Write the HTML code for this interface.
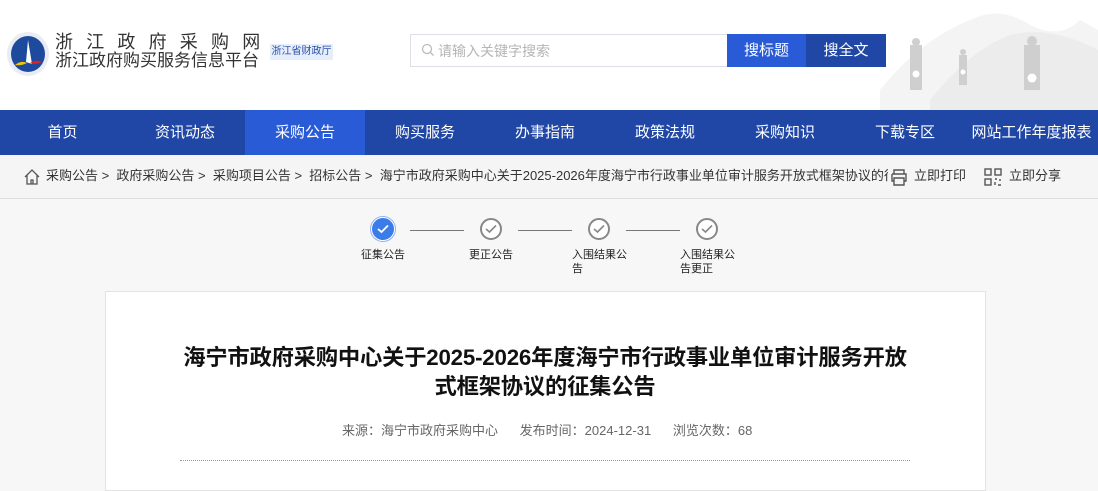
<!DOCTYPE html>
<html><head><meta charset="utf-8"><style>
*{margin:0;padding:0;box-sizing:border-box}
body{width:1098px;height:468px;overflow:hidden;background:#f7f7f7;font-family:"Liberation Sans","Noto Sans CJK SC",sans-serif;position:relative}
.hdr{position:absolute;left:0;top:0;width:1098px;height:110px;background:#fff}
.abs{position:absolute}
.nav{position:absolute;left:0;top:110px;width:1098px;height:45px;background:#2047a6;display:flex}
.nav div{width:120px;text-align:center;color:#fff;font-size:15px;line-height:45px}
.nav div.on{background:#2a5bd7}
.bc{position:absolute;left:0;top:155px;width:1098px;height:44px;background:#f5f5f5;border-bottom:1px solid #ddd;font-size:13px;color:#333;line-height:42px}
.step{position:absolute;top:218px;width:22px;height:22px;border-radius:50%;border:2px solid #888;background:#fff}
.step svg{position:absolute;left:3px;top:4px}
.sl{position:absolute;top:230px;height:1px;background:#777;width:54px}
.st{position:absolute;top:248px;font-size:11px;color:#222;line-height:14px;width:60px}
.card{position:absolute;left:105px;top:291px;width:881px;height:200px;background:#fff;border:1px solid #e3e3e3}
</style></head><body>
<div class="hdr">
 <svg class="abs" style="left:6px;top:30px" width="44" height="48" viewBox="0 0 44 48"><ellipse cx="22" cy="24" rx="21" ry="22" fill="#e9ecf2"/><ellipse cx="22" cy="24" rx="17" ry="18" fill="#1e4a9e"/><path d="M22 10 L26 34 L20 32 Z" fill="#fff"/><path d="M9 35 q6-5 12-2 q-6 3-12 2z" fill="#f2c500"/><path d="M24 33 q6-4 12-1 q-6 3-12 1z" fill="#d22"/></svg>
 <div class="abs" style="left:55px;top:32px;font-size:18px;color:#333;letter-spacing:13.2px;line-height:20px;white-space:nowrap">浙江政府采购网</div>
 <div class="abs" style="left:55px;top:51px;font-size:17px;color:#333;line-height:20px;white-space:nowrap">浙江政府购买服务信息平台</div>
 <div class="abs" style="left:270px;top:44px;width:63px;height:16px;background:#e6eefb;font-size:10px;color:#2a4fa5;text-align:center;line-height:16px">浙江省财政厅</div>
 <div class="abs" style="left:410px;top:34px;width:318px;height:33px;border:1px solid #dcdfe6;background:#fff"></div>
 <svg class="abs" style="left:421px;top:43px" width="14" height="14"><circle cx="6" cy="6" r="4.5" fill="none" stroke="#bbb" stroke-width="1.3"/><path d="M9.5 9.5 L12.5 12.5" stroke="#bbb" stroke-width="1.3"/></svg>
 <div class="abs" style="left:438px;top:41px;font-size:14px;color:#b5b5b5">请输入关键字搜索</div>
 <div class="abs" style="left:727px;top:34px;width:79px;height:33px;background:#2a5bd7;color:#fff;font-size:15px;text-align:center;line-height:33px">搜标题</div>
 <div class="abs" style="left:806px;top:34px;width:80px;height:33px;background:#2047a6;color:#fff;font-size:15px;text-align:center;line-height:33px">搜全文</div>
 <svg class="abs" style="left:870px;top:0" width="228" height="110" viewBox="0 0 228 110"><path d="M10 90 Q50 40 100 20 Q130 5 160 25 Q190 40 210 20 L228 30 L228 110 L10 110Z" fill="#f4f4f4"/><path d="M60 100 Q100 50 140 35 Q180 25 228 50 L228 110 L60 110Z" fill="#ececec"/>
 <g fill="#cfcfcf"><rect x="40" y="45" width="12" height="45"/><circle cx="46" cy="42" r="4"/><rect x="89" y="55" width="8" height="30"/><circle cx="93" cy="52" r="3"/><rect x="154" y="45" width="16" height="45"/><circle cx="162" cy="41" r="5"/></g>
 <g fill="#fff"><circle cx="46" cy="74" r="3.5"/><circle cx="93" cy="72" r="2.5"/><circle cx="162" cy="78" r="4.5"/></g></svg>
</div>
<div class="nav"><div style="width:125px">首页</div><div>资讯动态</div><div class="on">采购公告</div><div>购买服务</div><div>办事指南</div><div>政策法规</div><div>采购知识</div><div>下载专区</div><div style="width:133px">网站工作年度报表</div></div>
<div class="bc">
 <svg class="abs" style="left:23px;top:13px" width="18" height="18" viewBox="0 0 18 18"><path d="M2 9 L9 2 L16 9 M4 7 V16 H14 V7 M8 16 V12 H10 V16" fill="none" stroke="#555" stroke-width="1.3"/></svg>
 <div class="abs" style="left:46px;top:0;white-space:nowrap;width:842px;overflow:hidden">采购公告 &gt;&nbsp; 政府采购公告 &gt;&nbsp; 采购项目公告 &gt;&nbsp; 招标公告 &gt;&nbsp; 海宁市政府采购中心关于2025-2026年度海宁市行政事业单位审计服务开放式框架协议的征集公告</div>
 <svg class="abs" style="left:889px;top:12px" width="20" height="20" viewBox="0 0 20 20"><path d="M5 7 V3 H15 V7 M3 7 H17 V14 H15 M5 14 H3 V7 M5 11 H15 V18 H5Z" fill="none" stroke="#555" stroke-width="1.4"/></svg>
 <div class="abs" style="left:914px;top:0">立即打印</div>
 <svg class="abs" style="left:984px;top:13px" width="18" height="18" viewBox="0 0 18 18"><g fill="none" stroke="#555" stroke-width="1.4"><rect x="1" y="1" width="6" height="6"/><rect x="11" y="1" width="6" height="6"/><rect x="1" y="11" width="6" height="6"/><path d="M11 11 H13 M16 11 V13 M11 14 V17 M14 17 H17"/></g></svg>
 <div class="abs" style="left:1009px;top:0">立即分享</div>
</div>
<div class="step" style="left:372px;background:#3a7de8;border-color:#3a7de8;box-shadow:0 0 0 1px #fff,0 0 0 2px #8fb0f0"><svg width="12" height="10"><path d="M1 5 L4.5 8 L11 1.5" fill="none" stroke="#fff" stroke-width="1.8"/></svg></div>
<div class="step" style="left:480px"><svg width="12" height="10"><path d="M1 5 L4.5 8 L11 1.5" fill="none" stroke="#888" stroke-width="1.6"/></svg></div>
<div class="step" style="left:588px"><svg width="12" height="10"><path d="M1 5 L4.5 8 L11 1.5" fill="none" stroke="#888" stroke-width="1.6"/></svg></div>
<div class="step" style="left:696px"><svg width="12" height="10"><path d="M1 5 L4.5 8 L11 1.5" fill="none" stroke="#888" stroke-width="1.6"/></svg></div>
<div class="sl" style="left:410px"></div><div class="sl" style="left:518px"></div><div class="sl" style="left:626px"></div>
<div class="st" style="left:361px">征集公告</div>
<div class="st" style="left:469px">更正公告</div>
<div class="st" style="left:572px;width:56px">入围结果公告</div>
<div class="st" style="left:680px;width:56px">入围结果公告更正</div>
<div class="card"></div>
<div class="abs" style="left:130px;top:343px;width:830px;text-align:center;font-size:22.3px;font-weight:bold;color:#111;line-height:29px;letter-spacing:-0.2px">海宁市政府采购中心关于2025-2026年度海宁市行政事业单位审计服务开放<br>式框架协议的征集公告</div>
<div class="abs" style="left:342px;top:420px;font-size:13px;color:#666;white-space:nowrap">来源：海宁市政府采购中心&nbsp;&nbsp;&nbsp;&nbsp;&nbsp; 发布时间：2024-12-31&nbsp;&nbsp;&nbsp;&nbsp;&nbsp; 浏览次数：68</div>
<div class="abs" style="left:180px;top:460px;width:730px;border-top:1px dotted #999"></div>
</body></html>
